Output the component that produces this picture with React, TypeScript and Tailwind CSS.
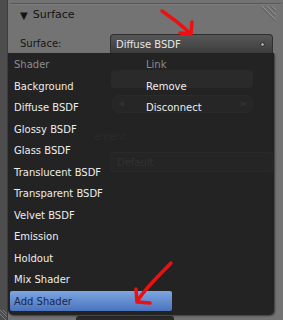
import React from 'react';

const SHADERS = [
  'Background',
  'Diffuse BSDF',
  'Glossy BSDF',
  'Glass BSDF',
  'Translucent BSDF',
  'Transparent BSDF',
  'Velvet BSDF',
  'Emission',
  'Holdout',
  'Mix Shader',
];

const LINKS = ['Remove', 'Disconnect'];

function CornerHatch() {
  return (
    <svg width="18" height="18" viewBox="0 0 18 18" className="mt-[1px]">
      <path d="M4 0 L18 14 M9 0 L18 9 M14 0 L18 4" stroke="#8e8e8e" strokeWidth="1" />
      <path d="M3 0.8 L17.2 15 M8 0.8 L17.2 10 M13 0.8 L17.2 5" stroke="#5e5e5e" strokeWidth="1" />
    </svg>
  );
}

/** 半透明メニューの背後に透けて見えるパネル要素 */
function GhostLayer() {
  return (
    <div className="absolute inset-0 pointer-events-none">
      <div className="absolute left-[103px] top-[17px] w-[142px] h-[18px] rounded-[4px] bg-[#2a2a2a]" />
      <div className="absolute left-[104px] top-[42px] w-[141px] h-[18px] rounded-[8px] bg-[#262626] border border-[#2b2b2b] flex items-center justify-between px-[5px] text-[8px] text-[#2f2f2f]">
        <span>◀</span>
        <span>▶</span>
      </div>
      <div className="absolute left-[86px] top-[76px] text-[10px] text-[#2b2b2b]">ement</div>
      <div className="absolute left-[102px] top-[99px] w-[163px] h-[20px] rounded-[3px] bg-[#252525] border border-[#292929] flex items-center pl-[6px] text-[10px] text-[#313131]">
        Default
      </div>
    </div>
  );
}

export default function App() {
  return (
    <div
      className="w-[283px] h-[320px] bg-[#737373] flex overflow-hidden relative"
      style={{ fontFamily: '"DejaVu Sans", "Liberation Sans", sans-serif' }}
    >
      {/* 左側のエディタ境界 */}
      <div className="w-[8px] h-full bg-[#4d4d4d] border-r border-[#3e3e3e] flex flex-col justify-end">
        <svg width="7" height="10" viewBox="0 0 7 10">
          <path d="M0 4 L6 10 M0 0 L7 7 M3 0 L7 4" stroke="#7a7a7a" strokeWidth="1" />
        </svg>
      </div>

      <div className="flex-1 flex flex-col">
        <div className="h-[3px]" />
        <div className="mx-[2px] h-[2px] border-t border-[#575757] bg-[#7b7b7b]" />

        {/* パネルヘッダー */}
        <div className="h-[21px] flex items-center pl-[12px] pr-[7px] text-[11px] text-[#141414]">
          <span className="text-[10px] mr-[5px]">▼</span>
          <span>Surface</span>
          <div className="ml-auto self-start">
            <CornerHatch />
          </div>
        </div>

        {/* Surface 行 */}
        <div className="mt-[8px] h-[19px] flex items-center pl-[12px] pr-[10px]">
          <span className="text-[10px] text-[#151515] w-[90px]">Surface:</span>
          <div className="flex-1 h-full rounded-t-[4px] border border-b-0 border-[#2f2f2f] bg-gradient-to-b from-[#575757] to-[#3d3d3d] flex items-center pl-[5px] pr-[7px]">
            <span className="text-[10px] text-[#e6e6e6]">Diffuse BSDF</span>
            <span className="ml-auto w-[5px] h-[5px] rounded-full bg-[#a0a0a0] border border-[#2a2a2a]" />
          </div>
        </div>

        {/* ポップアップメニュー */}
        <div className="relative w-[266px] h-[262px] bg-[#232323] rounded-b-[5px] shadow-[1px_1px_2px_rgba(0,0,0,0.5)] pt-[1px]">
          <GhostLayer />
          <div className="relative flex flex-col">
            <div className="h-[21.5px] flex items-center text-[10px] text-[#8c8c8c]">
              <span className="w-[138px] pl-[6px]">Shader</span>
              <span>Link</span>
            </div>
            {SHADERS.map((name, i) => (
              <div key={name} className="h-[21.5px] flex items-center text-[10px] text-[#ededed]">
                <span className="w-[138px] pl-[6px]">{name}</span>
                {LINKS[i] && <span>{LINKS[i]}</span>}
              </div>
            ))}
            <div className="h-[21.5px] flex items-center">
              <div className="ml-[2px] w-[162px] h-[20px] rounded-[2px] bg-gradient-to-b from-[#7ea6e2] to-[#4a73be] flex items-center pl-[4px] text-[10px] text-[#1b2843]">
                Add Shader
              </div>
            </div>
          </div>
        </div>

        <div className="mt-auto ml-[68px] w-[98px] h-[4px] rounded-t-[3px] bg-[#2a2a2a]" />
      </div>

      {/* 赤い注釈矢印 */}
      <svg className="absolute inset-0 pointer-events-none" width="283" height="320" viewBox="0 0 283 320">
        <g stroke="#ec1010" strokeWidth="3.5" strokeLinecap="round" strokeLinejoin="round" fill="none">
          <path d="M162 11 Q177 21 190 33" />
          <path d="M192 22 L191 34 L180 33" />
          <path d="M171 263 C161 274 148 285 138 300" />
          <path d="M136 289 L137 302 L150 303" />
        </g>
      </svg>
    </div>
  );
}
